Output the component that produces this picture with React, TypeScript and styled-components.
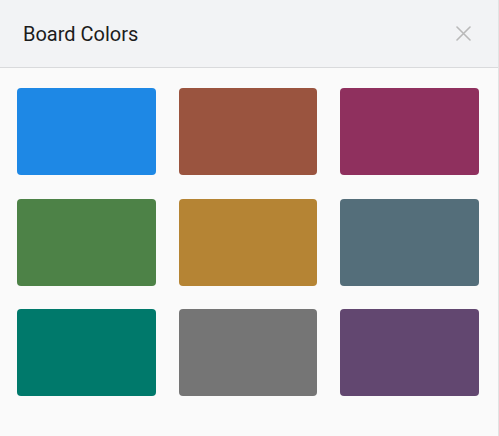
import styled, { createGlobalStyle } from "styled-components";

const GlobalStyle = createGlobalStyle`
  html, body {
    margin: 0;
    padding: 0;
    background: #fafafa;
  }
  body {
    font-family: Roboto, "Noto Sans", "Liberation Sans", sans-serif;
  }
`;

const Dialog = styled.div`
  width: 498px;
  height: 436px;
  background: #fafafa;
  border-right: 1px solid #e2e2e2;
  display: flex;
  flex-direction: column;
`;

const Header = styled.div`
  height: 68px;
  box-sizing: border-box;
  background: #f2f3f5;
  border-bottom: 1px solid #d9dadc;
  display: flex;
  align-items: center;
  justify-content: space-between;
  padding: 0 27px 0 23px;
`;

const Title = styled.h2`
  margin: 0;
  font-size: 20px;
  font-weight: 400;
  color: #1c1c1c;
`;

const CloseButton = styled.button`
  border: 0;
  background: none;
  padding: 0;
  width: 16px;
  height: 16px;
  display: flex;
  align-items: center;
  justify-content: center;
  cursor: pointer;
  color: #b9b9b9;
`;

const Grid = styled.div`
  display: grid;
  grid-template-columns: repeat(3, 1fr);
  grid-auto-rows: 87px;
  gap: 23.5px 23px;
  padding: 20px 19px 0 17px;
`;

const Swatch = styled.button<{ $color: string }>`
  border: 0;
  padding: 0;
  border-radius: 4px;
  background: ${(p) => p.$color};
  cursor: pointer;
`;

const colors = [
  "#1e88e5",
  "#9a543f",
  "#8f305e",
  "#4d8247",
  "#b58434",
  "#546e7a",
  "#00796b",
  "#757575",
  "#624770",
];

export default function App() {
  return (
    <>
      <GlobalStyle />
      <Dialog>
        <Header>
          <Title>Board Colors</Title>
          <CloseButton aria-label="Close">
            <svg width="15" height="15" viewBox="0 0 15 15">
              <path
                d="M1 1L14 14M14 1L1 14"
                stroke="currentColor"
                strokeWidth="1.6"
                strokeLinecap="round"
              />
            </svg>
          </CloseButton>
        </Header>
        <Grid>
          {colors.map((c) => (
            <Swatch key={c} $color={c} />
          ))}
        </Grid>
      </Dialog>
    </>
  );
}
